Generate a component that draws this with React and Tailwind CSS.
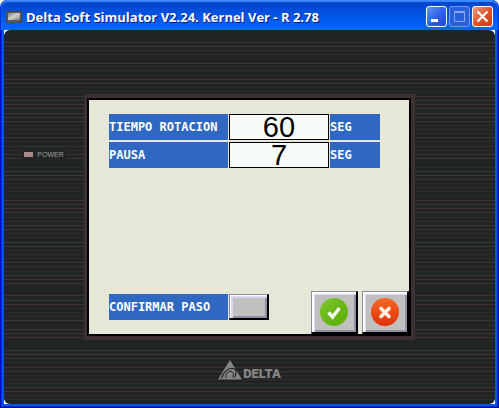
import React from "react";

// Grooves of the panel casing: distance from the top of the casing and tone.
const GROOVES = [
  [12, "r"], [16, "r"], [20, "r"], [24, "f"], [28, "f"], [33, "g"], [36, "f"], [40, "f"],
  [45, "f"], [49, "r"], [53, "g"], [57, "f"], [61, "f"], [66, "r"], [70, "r"], [74, "r"],
  [78, "r"], [83, "g"], [87, "r"], [91, "g"], [95, "f"], [99, "f"], [103, "f"], [107, "g"],
  [111, "f"], [116, "r"], [120, "f"], [124, "r"], [128, "r"], [137, "f"], [141, "g"],
  [145, "g"], [149, "r"], [153, "f"], [157, "f"], [161, "f"], [165, "f"], [170, "r"],
  [174, "r"], [178, "r"], [182, "r"], [187, "f"], [191, "r"], [195, "r"], [199, "r"],
  [203, "f"], [207, "f"], [212, "g"], [216, "g"], [220, "f"], [224, "f"], [228, "f"],
  [232, "g"], [236, "r"], [241, "f"], [245, "r"], [249, "r"], [253, "r"], [265, "r"],
  [270, "g"], [274, "r"], [278, "f"], [282, "f"], [286, "f"], [290, "g"], [295, "f"],
  [299, "r"], [303, "r"], [307, "r"], [320, "g"], [324, "g"], [328, "r"], [332, "f"],
  [337, "r"], [341, "r"], [345, "f"], [349, "f"], [353, "f"], [357, "r"], [361, "r"],
  [365, "f"], [369, "f"],
];
const TONES = { r: "#41302f", g: "#393936", f: "#2e2b2b" };

function Grooves() {
  return (
    <svg className="absolute inset-0 h-full w-full" aria-hidden="true" shapeRendering="crispEdges">
      {GROOVES.map(([y, tone]) => (
        <rect key={y} x="0" y={y} width="100%" height="1" fill={TONES[tone]} />
      ))}
    </svg>
  );
}

function TitleBar() {
  const control =
    "flex size-[21px] items-center justify-center rounded-[3px] border border-white";
  return (
    <header className="flex h-[30px] items-center gap-1 rounded-t-[7px] border-x border-[#0831d9] bg-linear-to-b from-[#0540c8] via-[#0054e3] to-[#0468ff] px-[5px] pt-[3px] shadow-[inset_0_2px_1px_#3a8cff]">
      <svg width="16" height="12" viewBox="0 0 16 12" aria-hidden="true">
        <defs>
          <linearGradient id="lcd" x1="0" y1="0" x2="1" y2="1">
            <stop offset="0" stopColor="#777" />
            <stop offset=".5" stopColor="#d0d0d0" />
            <stop offset="1" stopColor="#777" />
          </linearGradient>
        </defs>
        <rect width="16" height="12" fill="#4b4b4b" />
        <rect x="1.500" y="1.500" width="13" height="8" fill="url(#lcd)" stroke="#555" />
        <path d="M2 10.500h12" stroke="#888" strokeDasharray="1 2" />
      </svg>
      <h1 className="flex-1 truncate font-['Open_Sans','Noto_Sans',sans-serif] text-[13px] leading-5 font-bold text-white [text-shadow:1px_1px_0_#0a1883]">
        Delta Soft Simulator V2.24. Kernel Ver - R 2.78
      </h1>
      <div className="flex gap-[2px]">
        <button type="button" aria-label="Minimize" className={`${control} bg-linear-to-br from-[#6a93f5] via-[#2f62e8] to-[#1d49c8]`}>
          <svg width="19" height="19" viewBox="0 0 19 19" aria-hidden="true">
            <rect x="4" y="12" width="7" height="3" fill="#fff" />
          </svg>
        </button>
        <button type="button" aria-label="Maximize" disabled className="flex size-[21px] items-center justify-center rounded-[3px] border border-[#7898ee] bg-[#2860dc]">
          <svg width="19" height="19" viewBox="0 0 19 19" aria-hidden="true" fill="none" stroke="#8aa5f0">
            <path d="M4.500 4.500h10v10h-10zM4 5.500h11" />
          </svg>
        </button>
        <button type="button" aria-label="Close" className={`${control} bg-linear-to-br from-[#f09a80] via-[#e0532c] to-[#c83c10]`}>
          <svg width="19" height="19" viewBox="0 0 19 19" aria-hidden="true" stroke="#fff" strokeWidth="2.200">
            <path d="M4.500 4.500l10 10M14.500 4.500l-10 10" />
          </svg>
        </button>
      </div>
    </header>
  );
}

const plate =
  "flex h-[26px] items-center bg-[#2f68c0] font-['DejaVu_Sans_Mono',monospace] text-[12px] leading-4 font-bold text-white";

function ValueRow({ id, label, value }) {
  return (
    <div className="flex gap-px">
      <label htmlFor={id} className={`${plate} w-[119px] whitespace-nowrap`}>{label}</label>
      <input
        id={id}
        defaultValue={value}
        inputMode="numeric"
        className="h-[26px] w-[100px] border border-black bg-[#f8fcf8] p-0 text-center font-['Liberation_Sans',Arial,sans-serif] text-[29px] leading-6 text-black outline-none"
      />
      <span className={`${plate} w-[50px]`}>SEG</span>
    </div>
  );
}

const bevel =
  "border-t border-l border-t-[#8c8ca0] border-l-[#8c8ca0] border-r-2 border-b-2 border-r-black border-b-black bg-[#c0c0c0]";

function RoundButton({ label, children }) {
  return (
    <button
      type="button"
      aria-label={label}
      className={`${bevel} flex h-[43px] w-[47px] items-center justify-center shadow-[inset_2px_2px_0_#ffffff,inset_3px_3px_0_#d8d8f8,inset_-2px_-2px_0_#9090a4]`}
    >
      {children}
    </button>
  );
}

function Screen() {
  return (
    <main className="border-y-4 border-r-4 border-l-3 border-[#3c3030]">
      <div className="border-2 border-black">
        <div className="flex h-[234px] w-80 flex-col justify-between bg-[#e7e7d8] pt-[14px] pl-5">
          <div className="flex flex-col gap-[2px]">
            <ValueRow id="rotacion" label="TIEMPO ROTACION" value="60" />
            <ValueRow id="pausa" label="PAUSA" value="7" />
          </div>
          <div className="flex justify-between">
            <div className="flex gap-px pt-[3px]">
              <label htmlFor="confirmar" className={`${plate} w-[119px]`}>CONFIRMAR PASO</label>
              <button
                id="confirmar"
                type="button"
                className={`${bevel} h-[26px] w-10 shadow-[inset_1px_1px_0_#ffffff,inset_3px_3px_0_#d8d8f0,inset_-2px_-2px_0_#9090a4]`}
              />
            </div>
            <div className="flex gap-1">
              <RoundButton label="Aceptar">
                <svg width="28" height="28" viewBox="0 0 28 28" aria-hidden="true">
                  <defs>
                    <linearGradient id="ok" x1="0" y1="0" x2="1" y2="1">
                      <stop offset="0" stopColor="#80c830" />
                      <stop offset=".5" stopColor="#68b818" />
                      <stop offset="1" stopColor="#60b000" />
                    </linearGradient>
                  </defs>
                  <circle cx="14" cy="14" r="14" fill="url(#ok)" />
                  <path d="M8.500 14.500l4 4.500 7-9" fill="none" stroke="#f8fcf0" strokeWidth="3.400" />
                </svg>
              </RoundButton>
              <RoundButton label="Cancelar">
                <svg width="28" height="28" viewBox="0 0 28 28" aria-hidden="true">
                  <defs>
                    <linearGradient id="no" x1="0" y1="0" x2="0" y2="1">
                      <stop offset="0" stopColor="#f86828" />
                      <stop offset="1" stopColor="#e03008" />
                    </linearGradient>
                  </defs>
                  <circle cx="14" cy="14" r="14" fill="url(#no)" />
                  <path d="M10 10.500l8 8M18 10.500l-8 8" fill="none" stroke="#fff4ec" strokeWidth="3.600" strokeLinecap="round" />
                </svg>
              </RoundButton>
            </div>
          </div>
        </div>
      </div>
    </main>
  );
}

export default function App() {
  return (
    <div className="flex min-h-screen flex-col bg-white">
      <TitleBar />
      <div className="flex flex-1 flex-col bg-[#0850f0] px-1 pb-1 shadow-[inset_1px_0_0_#0010b0,inset_-1px_0_0_#001090,inset_0_-1px_0_#001090,inset_2px_0_0_#0030d8,inset_-2px_-2px_0_#0030c8]">
        <div className="flex flex-1 flex-col bg-white">
          <div className="relative flex-1 overflow-hidden rounded-[6px] bg-[#202424]">
            <Grooves />
            <div className="relative grid grid-cols-[1fr_auto_1fr] pt-16">
              <div className="flex justify-center pt-[56px]">
                <div className="flex h-[9px] items-center gap-1 bg-[#202424] px-[2px]">
                  <span className="h-[5px] w-[9px] bg-[#a88888]" />
                  <span className="font-['Liberation_Sans',Arial,sans-serif] text-[7px] leading-[9px] text-[#a0a0a0]">POWER</span>
                </div>
              </div>
              <Screen />
            </div>
            <div className="relative mt-5 mb-6 flex items-end justify-center gap-px text-[#858585]">
              <svg width="24" height="20" viewBox="0 0 24 20" aria-hidden="true">
                <path d="M12 0L24 19.500H0z" fill="currentColor" />
                <path d="M3.500 18.500C5 12 10 8 15 8.500c4 1 4 6 1 9" fill="none" stroke="#202424" strokeWidth="1.200" />
                <path d="M8 18c-1-4 2-7 5-6.500 3 .5 3 4 1 6" fill="none" stroke="#202424" strokeWidth="1" />
              </svg>
              <span className="font-['Roboto',sans-serif] text-[13px] leading-3 font-black">DELTA</span>
            </div>
          </div>
        </div>
      </div>
    </div>
  );
}
